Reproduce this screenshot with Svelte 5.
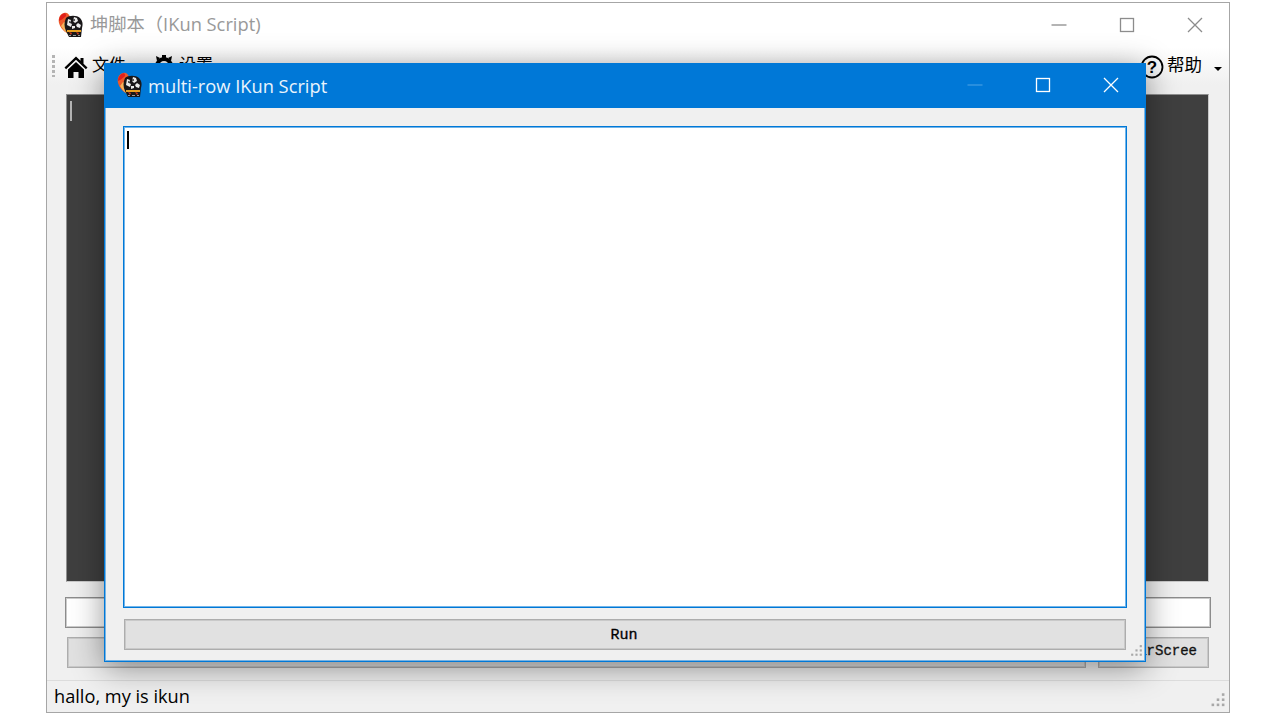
<script>
  const winButtons = ['min', 'max', 'close'];
</script>

{#snippet mascot()}
  <svg class="mascot" width="26" height="26" viewBox="0 0 26 26">
    <path d="M1 11C0 6 2 2 6 1c3-1 5 1 6 4L9 21c-4-2-7-6-8-10z" fill="#ee5a2a" />
    <path d="M1 9C1 5 3 2 7 1c1 1 2 3 0 4-2 2-4 3-6 4z" fill="#e0201c" />
    <path d="M3 14c2 3 4 6 7 8l1-9-5-3z" fill="#f8b35c" />
    <path d="M8 6c3-3 11-3 14 0 3 3 3 7 2 10l-1 9H11l-3-6c-2-4-2-9 0-13z" fill="#191719" />
    <path d="M10 7l3 1-1 3 2 1-1 3-4-2zM16 5l3 1 1 3-3 2-2-2zM20 11l3 2-1 3-3-1-1-2zM14 14l3 0 0 2-3 1z" fill="#e9e9e9" />
    <path d="M15 7h2v2h-2zM11 9h1v2h-1z" fill="#555" />
    <path d="M9 18h14v2H9z" fill="#e8a020" />
    <path d="M11 20l3 1-1 2zM18 20l3 1-1 2z" fill="#d63a20" />
    <path d="M11 23h2v1h-2zM15 23h3v1h-3zM20 23h2v1h-2z" fill="#9a9a9a" />
  </svg>
{/snippet}

{#snippet grip()}
  <svg class="grip" viewBox="0 0 14 14" fill="#a8a8a8">
    <rect x="10" y="1" width="2" height="2" />
    <rect x="6" y="5" width="2" height="2" />
    <rect x="10" y="5" width="2" height="2" />
    <rect x="2" y="9" width="2" height="2" />
    <rect x="6" y="9" width="2" height="2" />
    <rect x="10" y="9" width="2" height="2" />
  </svg>
{/snippet}

{#snippet winIcon(kind)}
  <svg width="16" height="16" viewBox="0 0 16 16" fill="none" stroke="currentColor" stroke-width="1.3">
    {#if kind === 'min'}
      <path d="M0.5 8h15" />
    {:else if kind === 'max'}
      <rect x="1.5" y="1.5" width="13" height="13" />
    {:else}
      <path d="M1 1l14 14M15 1L1 15" />
    {/if}
  </svg>
{/snippet}

<div class="main-window">
  <header class="title-bar">
    {@render mascot()}
    <span class="title">坤脚本（IKun Script)</span>
    <div class="win-buttons">
      {#each winButtons as b}
        <span class="win-btn">{@render winIcon(b)}</span>
      {/each}
    </div>
  </header>

  <div class="toolbar">
    <span class="handle"></span>
    <svg class="tool-icon" width="24" height="24" viewBox="0 0 24 24">
      <path d="M12 1.5L0.5 12.5l1.6 1.7L12 4.8l9.9 9.4 1.6-1.7-4-3.8V3h-3v2.8z" fill="#000" />
      <path d="M4 14.5L12 7l8 7.5V23h-5.5v-6h-5v6H4z" fill="#000" />
    </svg>
    <span class="tool-label">文件</span>
    <svg class="tool-icon gear" width="22" height="22" viewBox="0 0 22 22">
      <circle cx="11" cy="11" r="7" fill="none" stroke="#000" stroke-width="4" />
      <path d="M9 0h4v4H9zM9 18h4v4H9zM0 9h4v4H0zM18 9h4v4h-4zM3 1l4 2-3 3zM19 1l-4 2 3 3z" fill="#000" />
    </svg>
    <span class="tool-label">设置</span>
    <span class="spacer"></span>
    <svg class="tool-icon" width="24" height="24" viewBox="0 0 24 24">
      <circle cx="12" cy="12" r="10.5" fill="none" stroke="#000" stroke-width="1.8" />
      <text x="12" y="18" text-anchor="middle" class="help-mark">?</text>
    </svg>
    <span class="tool-label help">帮助</span>
    <span class="caret"></span>
  </div>

  <section class="body">
    <div class="console"><span class="console-cursor"></span></div>
    <div class="command-input"></div>
    <div class="actions">
      <div class="btn send"></div>
      <div class="btn clear">ClearScree</div>
    </div>
  </section>

  <footer class="status">
    <span>hallo, my is ikun</span>
    {@render grip()}
  </footer>

  <div class="dialog">
    <header class="dialog-title">
      {@render mascot()}
      <span class="title">multi-row IKun Script</span>
      <div class="win-buttons">
        {#each winButtons as b}
          <span class="win-btn" class:faded={b === 'min'}>{@render winIcon(b)}</span>
        {/each}
      </div>
    </header>
    <div class="dialog-body">
      <div class="script-input"><span class="caret-line"></span></div>
      <div class="btn run">Run</div>
    </div>
    {@render grip()}
  </div>
</div>

<style>
  :global(body) {
    background: #fff;
  }

  .main-window {
    position: relative;
    box-sizing: border-box;
    width: 1184px;
    height: 711px;
    margin: 2px 0 0 46px;
    border: 1px solid #a6a6a6;
    background: #f0f0f0;
    display: flex;
    flex-direction: column;
    font-family: "Open Sans", "Noto Sans CJK SC", sans-serif;
  }

  .title-bar {
    height: 44px;
    flex: none;
    display: flex;
    align-items: center;
    padding-left: 11px;
    background: #fff;
    color: #999;
  }

  .title {
    margin: -4px 0 0 6px;
    font-size: 18.3px;
  }

  .win-buttons {
    margin-left: auto;
    display: flex;
  }

  .win-btn {
    width: 68px;
    display: flex;
    justify-content: center;
    color: #8c8c8c;
  }

  .toolbar {
    height: 47px;
    flex: none;
    display: flex;
    align-items: flex-start;
    padding: 7px 5px 0 5px;
    box-sizing: border-box;
    background: linear-gradient(#fff, #f0f0f0 80%);
    color: #000;
    font-size: 17px;
  }

  .handle {
    width: 3px;
    height: 22px;
    margin-top: 1px;
    background: repeating-linear-gradient(#b4b4b4 0 3px, transparent 3px 5px);
  }

  .tool-icon {
    flex: none;
    margin-left: 9px;
    margin-top: 1px;
  }

  .tool-icon.gear {
    margin-left: 27px;
  }

  .tool-label {
    margin: -3px 0 0 4px;
    line-height: 26px;
    font-family: "Noto Sans CJK SC", sans-serif;
  }

  .tool-label.help {
    margin-left: 3px;
    font-size: 17.5px;
  }

  .help-mark {
    font: 700 17px "Liberation Sans", sans-serif;
    fill: #000;
  }

  .spacer {
    flex: 1;
  }

  .caret {
    margin: 13px 2px 0 12px;
    border: 4px solid transparent;
    border-top: 4px solid #000;
    border-bottom: 0;
  }

  .body {
    flex: 1;
    display: flex;
    flex-direction: column;
    padding: 0 18px;
  }

  .console {
    height: 488px;
    box-sizing: border-box;
    margin: 0 2px 0 1px;
    background: #3f3f3f;
    border: 1px solid #8f8f8f;
    border-right-color: #c8c8c8;
    border-bottom-color: #c8c8c8;
    padding: 6px 3px;
  }

  .console-cursor {
    display: block;
    width: 2px;
    height: 20px;
    background: #b4b4b4;
  }

  .command-input {
    height: 31px;
    margin-top: 15px;
    box-sizing: border-box;
    background: #fff;
    border: 1px solid #8c8c8c;
    box-shadow: inset 0 0 0 1px rgba(140, 140, 140, 0.45);
  }

  .actions {
    display: flex;
    gap: 12px;
    margin-top: 9px;
    padding: 0 2px;
  }

  .btn {
    height: 31px;
    box-sizing: border-box;
    display: flex;
    align-items: center;
    justify-content: center;
    background: #e1e1e1;
    border: 1px solid #adadad;
    box-shadow: inset 0 0 0 1px rgba(173, 173, 173, 0.45);
    color: #000;
    font-family: "Liberation Mono", monospace;
    font-size: 14px;
    -webkit-text-stroke: 0.3px #000;
  }

  .send {
    flex: 1;
  }

  .clear {
    width: 111px;
    color: #222;
    padding-left: 3px;
    padding-bottom: 4px;
  }

  .status {
    height: 33px;
    flex: none;
    box-sizing: border-box;
    margin-top: 12px;
    border-top: 1px solid #dcdcdc;
    display: flex;
    align-items: center;
    justify-content: space-between;
    padding: 0 0 2px 7px;
    font-size: 18.2px;
    color: #000;
    position: relative;
  }

  .status .grip {
    position: absolute;
    right: 2px;
    bottom: 3px;
    width: 18px;
    height: 18px;
  }

  .dialog {
    position: absolute;
    left: 57px;
    top: 60px;
    width: 1042px;
    height: 599px;
    box-sizing: border-box;
    border: 1px solid #0078d7;
    box-shadow: inset 0 0 0 1px rgba(0, 120, 215, 0.5), 0 6px 30px rgba(0, 0, 0, 0.42);
    background: #f0f0f0;
    display: flex;
    flex-direction: column;
  }

  .dialog-title {
    height: 44px;
    box-sizing: border-box;
    flex: none;
    display: flex;
    align-items: center;
    padding: 0 0 2px 13px;
    margin: 0 -1px;
    background: #0078d7;
    color: #fff;
  }

  .dialog-title .title {
    margin: 0 0 0 5px;
    font-size: 18.3px;
    color: #eaf4fc;
  }

  .dialog-title .win-buttons {
    padding-right: 1px;
  }

  .dialog-title .win-btn {
    color: #fff;
  }

  .dialog-title .win-btn.faded {
    color: #3f9be2;
  }

  .dialog-body {
    flex: 1;
    display: flex;
    flex-direction: column;
    padding: 18px 18px 10px 18px;
  }

  .script-input {
    height: 482px;
    flex: none;
    box-sizing: border-box;
    background: #fff;
    border: 1px solid #0078d7;
    box-shadow: inset 0 0 0 1px rgba(0, 120, 215, 0.55);
    padding: 4px 3px;
  }

  .caret-line {
    display: block;
    width: 2px;
    height: 18px;
    background: #000;
  }

  .run {
    margin: 11px 1px 0;
    height: 31px;
    font-size: 15px;
    padding: 1px 2px 0 0;
  }

  .dialog .grip {
    position: absolute;
    right: 1px;
    bottom: 2px;
    width: 15px;
    height: 15px;
  }
</style>
